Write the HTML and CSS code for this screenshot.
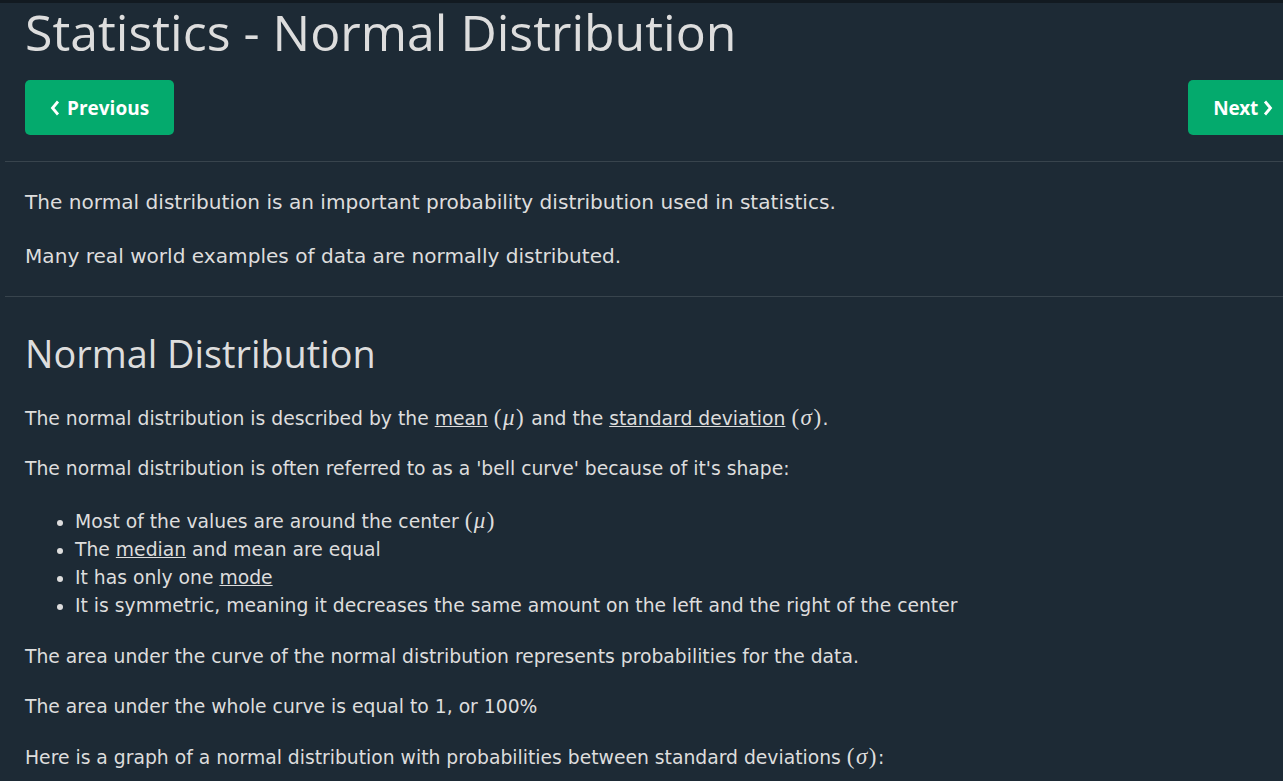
FILE: index.html
```html
<!DOCTYPE html>
<html lang="en">
<head>
<meta charset="utf-8">
<title>Statistics - Normal Distribution</title>
<link rel="stylesheet" href="styles.css">
</head>
<body>
<div class="topstrip"></div>
<div class="main">
  <h1 class="title">Statistics - Normal Distribution</h1>
  <div class="nextprev">
    <a class="btn" href="#"><svg class="chev" width="10" height="16" viewBox="0 0 10 16"><path d="M8 1.5 L2.5 8 L8 14.5" fill="none" stroke="#fff" stroke-width="2.8" stroke-linejoin="miter"/></svg>Previous</a>
    <a class="btn btn-next" href="#">Next<svg class="chev" width="10" height="16" viewBox="0 0 10 16"><path d="M2 1.5 L7.5 8 L2 14.5" fill="none" stroke="#fff" stroke-width="2.8" stroke-linejoin="miter"/></svg></a>
  </div>
  <hr class="rule">
  <div class="intro">
    <p>The normal distribution is an important probability distribution used in statistics.</p>
    <p>Many real world examples of data are normally distributed.</p>
  </div>
  <hr class="rule">
  <h2 class="subtitle">Normal Distribution</h2>
  <p>The normal distribution is described by the <a href="#">mean</a> <span class="math">(<i>μ</i>)</span> and the <a href="#">standard deviation</a> <span class="math">(<i>σ</i>)</span>.</p>
  <p>The normal distribution is often referred to as a 'bell curve' because of it's shape:</p>
  <ul>
    <li>Most of the values are around the center <span class="math">(<i>μ</i>)</span></li>
    <li>The <a href="#">median</a> and mean are equal</li>
    <li>It has only one <a href="#">mode</a></li>
    <li>It is symmetric, meaning it decreases the same amount on the left and the right of the center</li>
  </ul>
  <p>The area under the curve of the normal distribution represents probabilities for the data.</p>
  <p>The area under the whole curve is equal to 1, or 100%</p>
  <p>Here is a graph of a normal distribution with probabilities between standard deviations <span class="math">(<i>σ</i>)</span>:</p>
</div>
</body>
</html>
```
FILE: styles.css
```css
html, body {
  margin: 0;
  padding: 0;
  overflow: hidden;
  background: #1d2a35;
}
body {
  color: #dddddd;
  font-family: "DejaVu Sans", Verdana, sans-serif;
  font-size: 18.75px;
  line-height: 28px;
}
.topstrip {
  height: 3px;
  background: #121a21;
}
.main {
  width: 1313px;
  margin-left: 5px;
  padding: 0 20px;
  box-sizing: border-box;
}
.title {
  font-family: "Open Sans", "Noto Sans", sans-serif;
  font-weight: 400;
  font-size: 50px;
  line-height: 58px;
  margin: 0;
  padding-top: 0;
  color: #dddddd;
}
.nextprev {
  display: flex;
  justify-content: space-between;
  margin-top: 19px;
}
.btn {
  display: inline-flex;
  align-items: center;
  gap: 7px;
  height: 55px;
  padding: 0 25px;
  background: #04aa6d;
  color: #ffffff;
  border-radius: 5px;
  text-decoration: none;
  font-family: "Open Sans", "Noto Sans", sans-serif;
  font-weight: 700;
  font-size: 19px;
  box-sizing: border-box;
}
.btn-next {
  gap: 5px;
  letter-spacing: -0.3px;
}
.chev {
  display: block;
  flex: none;
}
.rule {
  border: 0;
  border-top: 1px solid #38444d;
  margin: 26px -20px 0;
  height: 0;
}
.intro {
  padding: 25px 0;
  font-size: 20.1px;
  line-height: 30px;
}
.intro p {
  margin: 0;
}
.intro p + p {
  margin-top: 24px;
}
.intro + .rule {
  margin-top: 0;
}
.subtitle {
  font-family: "Open Sans", "Noto Sans", sans-serif;
  font-weight: 400;
  font-size: 37.8px;
  line-height: 48px;
  margin: 33px 0 26px;
  color: #dddddd;
}
p {
  margin: 22px 0;
}
.subtitle + p {
  margin-top: 26px;
}
ul {
  margin: 24px 0 23px;
  padding-left: 50px;
}
a {
  color: #dddddd;
  text-decoration: underline;
}
.math {
  font-family: "Liberation Serif", "DejaVu Serif", serif;
  font-size: 23px;
  letter-spacing: 1.5px;
}
.math i {
  font-style: italic;
}
```
